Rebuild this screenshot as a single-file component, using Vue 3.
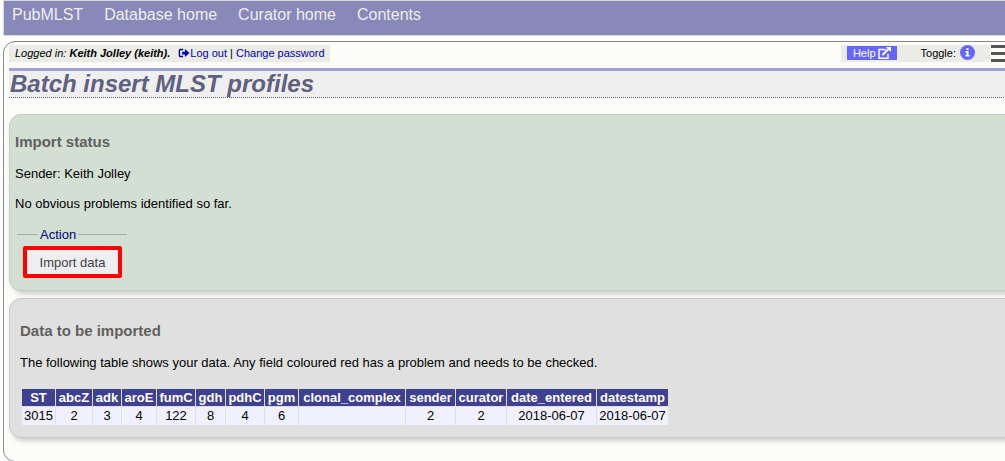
<script setup>
const links = ['PubMLST', 'Database home', 'Curator home', 'Contents']
const columns = [
  { name: 'ST', value: '3015', width: 33 },
  { name: 'abcZ', value: '2', width: 36 },
  { name: 'adk', value: '3', width: 28 },
  { name: 'aroE', value: '4', width: 34 },
  { name: 'fumC', value: '122', width: 38 },
  { name: 'gdh', value: '8', width: 29 },
  { name: 'pdhC', value: '4', width: 38 },
  { name: 'pgm', value: '6', width: 33 },
  { name: 'clonal_complex', value: '', width: 106 },
  { name: 'sender', value: '2', width: 49 },
  { name: 'curator', value: '2', width: 50 },
  { name: 'date_entered', value: '2018-06-07', width: 89 },
  { name: 'datestamp', value: '2018-06-07', width: 71 },
]
</script>

<template>
  <div class="page">
    <nav class="menu">
      <a v-for="link in links" :key="link" href="#">{{ link }}</a>
    </nav>
    <main class="content">
      <div class="topbar">
        <div class="login">
          <i>Logged in: <b>Keith Jolley (keith).</b></i>
          <a class="logout" href="#"><svg class="exit" viewBox="0 0 12 12" aria-hidden="true">
            <path d="M5 1.7H2.2Q1 1.7 1 2.9v5.2q0 1.2 1.2 1.2H5" fill="none" stroke="currentColor" stroke-width="1.6" />
            <path d="M4 4h3V1.2L12 5.5 7 9.8V7H4z" fill="currentColor" />
          </svg>Log out</a> | <a href="#">Change password</a>
        </div>
        <div class="tools">
          <a class="help" href="#">Help<svg class="external" viewBox="0 0 13 12" aria-hidden="true">
            <path d="M7.5 2.5H1v8.7h9V7" fill="none" stroke="currentColor" stroke-width="1.5" />
            <path d="M4.5 8L10.5 2" stroke="currentColor" stroke-width="2" />
            <path d="M8 0h5v5z" fill="currentColor" />
          </svg></a>
          <span class="toggle">Toggle:
            <button class="info" type="button" aria-label="Toggle information"><svg viewBox="0 0 15 15" aria-hidden="true">
              <circle cx="7.5" cy="7.5" r="7.5" fill="#66f" />
              <path d="M6.5 3h2v2h-2zM5.5 6h3v4h1v1.5h-4V10h1V7.5h-1z" fill="#fff" />
            </svg></button>
          </span>
        </div>
        <button class="burger" type="button" aria-label="Menu"><span></span><span></span><span></span></button>
      </div>
      <h1>Batch insert MLST profiles</h1>
      <section class="box status">
        <h2>Import status</h2>
        <p>Sender: Keith Jolley</p>
        <p>No obvious problems identified so far.</p>
        <fieldset>
          <legend>Action</legend>
          <button class="submit" type="button">Import data</button>
        </fieldset>
      </section>
      <section class="box data">
        <h2>Data to be imported</h2>
        <p>The following table shows your data. Any field coloured red has a problem and needs to be checked.</p>
        <table>
          <colgroup>
            <col v-for="column in columns" :key="column.name" :style="{ width: column.width + 'px' }">
          </colgroup>
          <thead>
            <tr><th v-for="column in columns" :key="column.name" scope="col">{{ column.name }}</th></tr>
          </thead>
          <tbody>
            <tr><td v-for="column in columns" :key="column.name">{{ column.value }}</td></tr>
          </tbody>
        </table>
      </section>
    </main>
  </div>
</template>

<style>
body {
  background: #fff;
}
</style>

<style scoped>
.page {
  overflow: hidden;
  padding-left: 3px;
  font: 13px/15px "Liberation Sans", Arial, sans-serif;
  color: #000;
}
a {
  color: #0000b4;
  text-decoration: none;
}
button {
  font: inherit;
  border: 0;
  padding: 0;
}
.menu {
  display: flex;
  gap: 21px;
  padding: 4px 8px 11px;
  border: 1px solid #d8d8e0;
  border-right: 0;
  background: #8888b9;
}
.menu a {
  font-size: 16px;
  line-height: 19px;
  color: #eee;
}
.content {
  margin: 5px -16px 0 0;
  padding: 3px 16px 23px 5px;
  border: 1px solid #888;
  border-radius: 12px;
  background: #fcfdf8;
}
.topbar {
  display: flex;
  margin-bottom: 6px;
  font-size: 11px;
  line-height: 17px;
}
.login {
  padding: 0 5px 0 6px;
  background: #ebebe8;
}
.logout {
  margin-left: 8px;
}
.exit {
  width: 12px;
  height: 11px;
  vertical-align: -2px;
}
.tools {
  display: flex;
  align-items: flex-start;
  gap: 24px;
  margin-left: auto;
  padding: 0 15px 0 6px;
  background: #ebebe8;
}
.help {
  display: flex;
  align-items: center;
  gap: 2px;
  margin-top: 1px;
  padding: 0 6px;
  line-height: 14px;
  background: #66f;
  color: #fff;
}
.external {
  width: 13px;
  height: 12px;
}
.toggle {
  display: flex;
  align-items: flex-start;
  gap: 4px;
}
.info {
  width: 15px;
  height: 15px;
  background: none;
}
.info svg {
  display: block;
}
.burger {
  display: flex;
  flex-direction: column;
  justify-content: space-between;
  width: 13px;
  margin-left: 1px;
  background: none;
}
.burger span {
  width: 16px;
  height: 3px;
  background: #555;
}
h1 {
  margin: 0 -16px 16px 0;
  padding-left: 1px;
  border-top: 3px solid #a0a0d0;
  border-bottom: 1px dotted #606090;
  background: #efefef;
  font-size: 24px;
  font-style: italic;
  line-height: 26px;
  color: #606080;
}
.box {
  margin-right: -16px;
  border: 1px solid #c8c8c8;
  border-radius: 12px;
  box-shadow: 3px 3px 5px #ccc;
}
.box p {
  margin: 0 0 15px;
}
h2 {
  margin: 0 0 15px;
  font-size: 15px;
  line-height: 18px;
  color: #606060;
}
.status {
  margin-bottom: 7px;
  padding: 18px 5px 12px;
  background: #d4dfd4;
}
fieldset {
  width: 110px;
  box-sizing: border-box;
  margin: 16px 2px 0;
  padding: 4px 5px 0 6px;
  border: 0;
  border-top: 1px solid #aaa;
}
legend {
  margin-left: 15px;
  padding: 0 2px;
  color: #000080;
}
.submit {
  width: 100%;
  height: 32px;
  border: 4px solid #f00;
  border-radius: 2px;
  background: #eeeef0;
  color: #404040;
}
.data {
  padding: 23px 10px 11px;
  background: #e0e0e0;
}
table {
  width: 648px;
  margin: 18px 0 0 1px;
  table-layout: fixed;
  border-collapse: separate;
  border-spacing: 1px;
}
th,
td {
  padding: 1px 0;
  text-align: center;
}
th {
  background: #404090;
  color: #fff;
}
td {
  padding-bottom: 2px;
  background: #f0f0ff;
}
</style>
